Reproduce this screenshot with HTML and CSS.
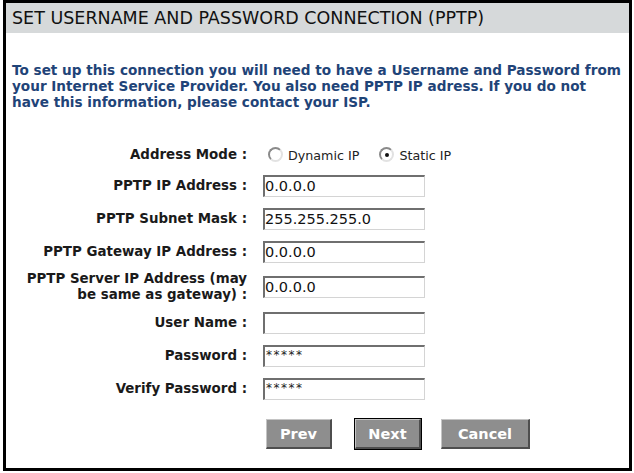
FILE: index.html
```html
<!DOCTYPE html>
<html>
<head>
<meta charset="utf-8">
<link rel="stylesheet" href="styles.css">
</head>
<body>
<div class="panel">
  <div class="header">SET USERNAME AND PASSWORD CONNECTION (PPTP)</div>
  <p class="intro">To set up this connection you will need to have a Username and Password from your Internet Service Provider. You also need PPTP IP adress. If you do not have this information, please contact your ISP.</p>
  <div class="form">
    <div class="row row-mode">
      <div class="label">Address Mode :</div>
      <div class="field radios">
        <span class="radio"></span><span class="rlabel">Dynamic IP</span>
        <span class="radio checked"></span><span class="rlabel">Static IP</span>
      </div>
    </div>
    <div class="row">
      <div class="label">PPTP IP Address :</div>
      <div class="field"><div class="input">0.0.0.0</div></div>
    </div>
    <div class="row">
      <div class="label">PPTP Subnet Mask :</div>
      <div class="field"><div class="input">255.255.255.0</div></div>
    </div>
    <div class="row">
      <div class="label">PPTP Gateway IP Address :</div>
      <div class="field"><div class="input">0.0.0.0</div></div>
    </div>
    <div class="row row-tall">
      <div class="label">PPTP Server IP Address (may<br>be same as gateway) :</div>
      <div class="field"><div class="input">0.0.0.0</div></div>
    </div>
    <div class="row">
      <div class="label">User Name :</div>
      <div class="field"><div class="input"></div></div>
    </div>
    <div class="row">
      <div class="label">Password :</div>
      <div class="field"><div class="input pw">*****</div></div>
    </div>
    <div class="row">
      <div class="label">Verify Password :</div>
      <div class="field"><div class="input pw">*****</div></div>
    </div>
    <div class="row row-buttons">
      <div class="label"></div>
      <div class="field buttons">
        <span class="btn btn-prev">Prev</span>
        <span class="btn btn-next">Next</span>
        <span class="btn btn-cancel">Cancel</span>
      </div>
    </div>
  </div>
</div>
</body>
</html>
```
FILE: styles.css
```css
html, body {
  margin: 0;
  padding: 0;
  background: #ffffff;
}
body {
  font-family: "DejaVu Sans", sans-serif;
}
.panel {
  margin-left: 3px;
  width: 629px;
  height: 471px;
  box-sizing: border-box;
  border: 3px solid #000;
  background: #fff;
}
.header {
  height: 30px;
  line-height: 31px;
  background: #d6d9da;
  padding-left: 6px;
  font-size: 17.5px;
  color: #111;
}
.intro {
  margin: 29px 0 0 0;
  padding: 0 6px;
  font-size: 13.6px;
  line-height: 16px;
  font-weight: bold;
  color: #1f4478;
}
.form {
  margin-top: 30px;
  display: flex;
  flex-direction: column;
}
.row {
  display: grid;
  grid-template-columns: 241px 1fr;
  column-gap: 16px;
  align-items: center;
  height: 33px;
}
.row-mode { height: 29px; }
.row-tall { height: 38px; }
.row-buttons { height: 58px; }
.label {
  text-align: right;
  font-size: 13.4px;
  font-weight: bold;
  line-height: 16px;
  color: #1a1a1a;
  white-space: nowrap;
}
.field {
  display: flex;
  align-items: center;
}
.input {
  width: 162px;
  height: 22px;
  box-sizing: border-box;
  border-style: solid;
  border-width: 2px 1px 1px 2px;
  border-color: #6f6f6f #d4d4d4 #d4d4d4 #6f6f6f;
  font-size: 14.5px;
  line-height: 19px;
  padding-left: 0;
  color: #111;
}
.input.pw {
  font-size: 12px;
  line-height: 17px;
  letter-spacing: 1.5px;
  padding-left: 1px;
  color: #222;
}
.radios {
  padding-left: 5px;
}
.radio {
  width: 11px;
  height: 11px;
  border-radius: 50%;
  border: 2px solid;
  border-color: #8a8a8a #e2e2e2 #e2e2e2 #8a8a8a;
  background: #fff;
  position: relative;
  margin-right: 5px;
}
.radio.checked::after {
  content: "";
  position: absolute;
  left: 3.5px;
  top: 3.5px;
  width: 4px;
  height: 4px;
  border-radius: 50%;
  background: #111;
}
.rlabel {
  font-size: 12.7px;
  color: #222;
  margin-right: 20px;
  padding-top: 2px;
}
.buttons {
  padding-left: 3px;
}
.btn {
  display: inline-flex;
  align-items: center;
  justify-content: center;
  height: 30px;
  box-sizing: border-box;
  background: #8e8e8e;
  color: #fff;
  font-weight: bold;
  font-size: 14.5px;
  border-style: solid;
  border-width: 1px 2px 2px 1px;
  border-color: #c4c4c4 #4e4e4e #4e4e4e #c4c4c4;
}
.btn-prev { width: 66px; }
.btn-next {
  width: 66px;
  margin-left: 23px;
  outline: 1px solid #000;
}
.btn-cancel {
  width: 89px;
  margin-left: 20px;
}
```
